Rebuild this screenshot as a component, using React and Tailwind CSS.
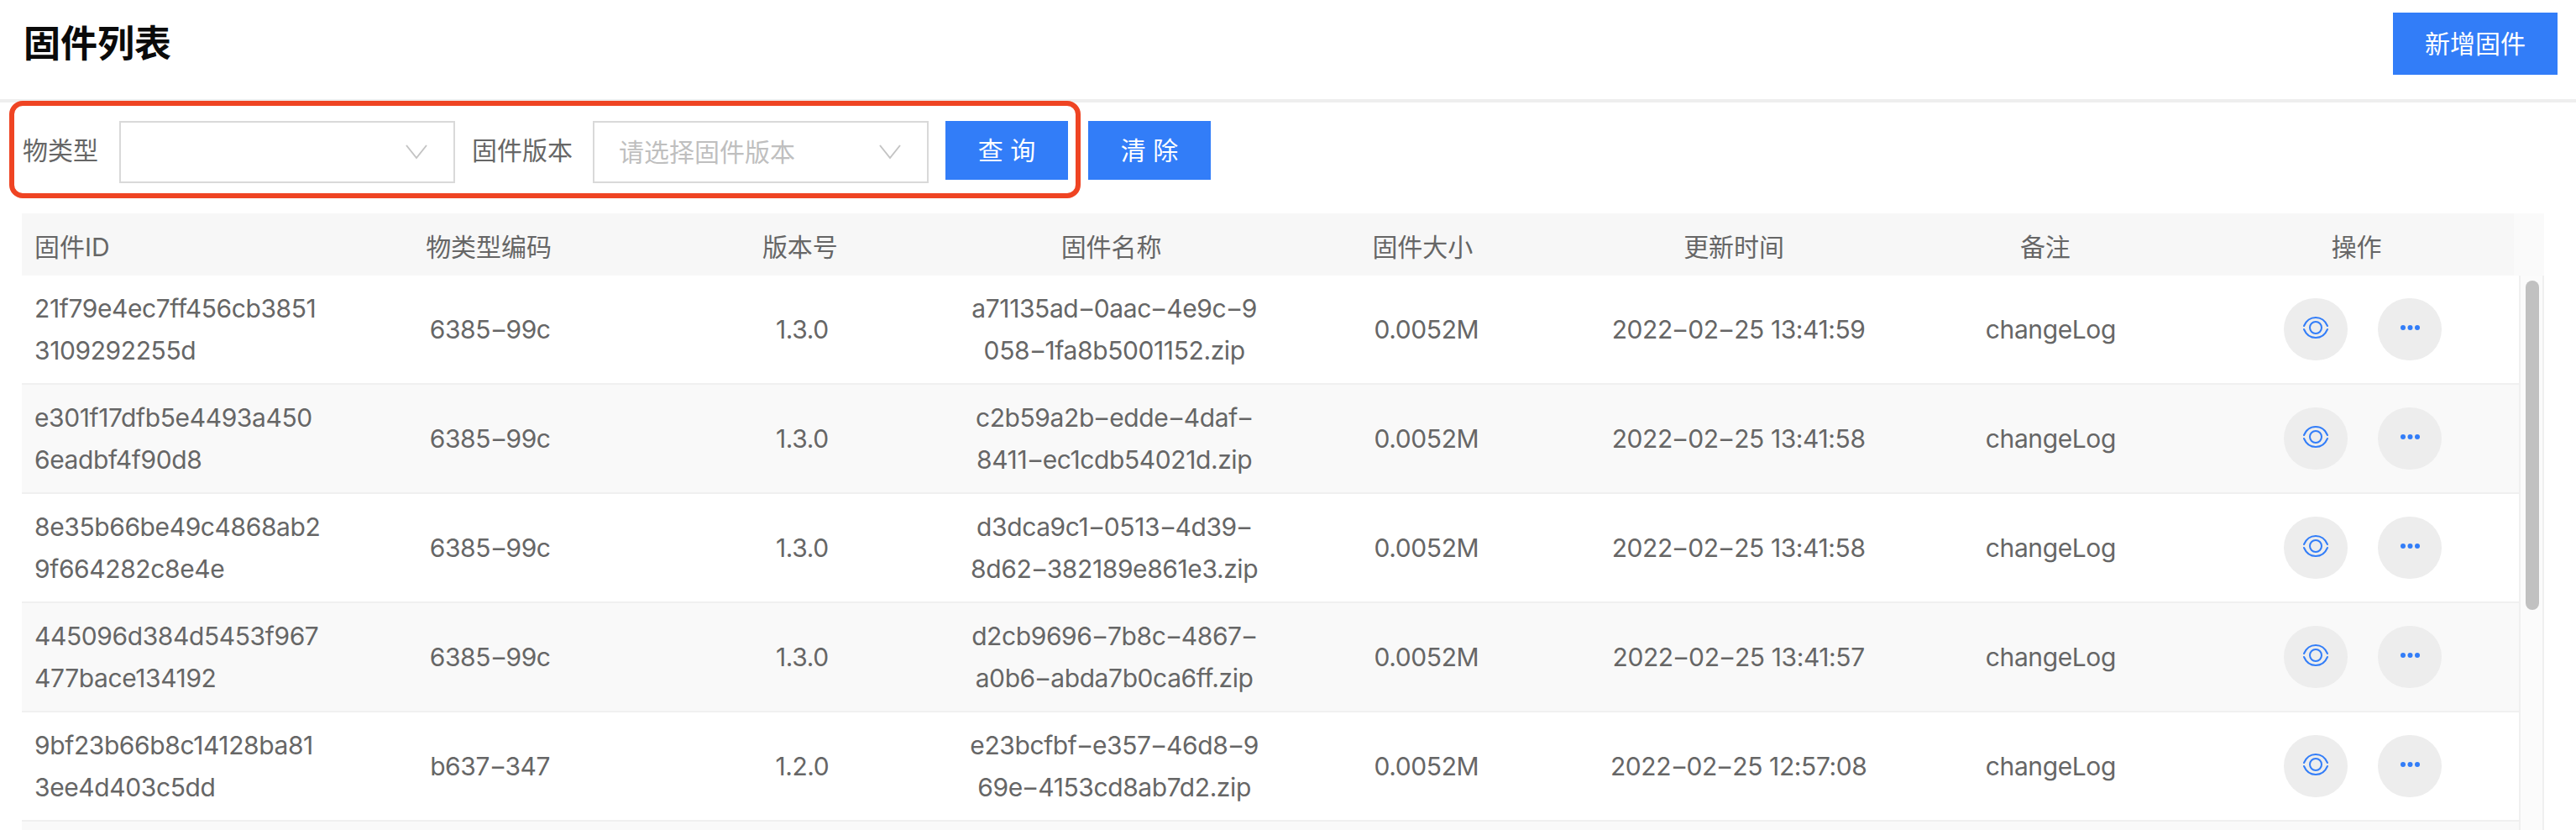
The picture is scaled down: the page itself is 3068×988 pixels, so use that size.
const rows = [
  { id: ['21f79e4ec7ff456cb3851', '3109292255d'], type: '6385-99c', ver: '1.3.0', name: ['a71135ad-0aac-4e9c-9', '058-1fa8b5001152.zip'], time: '2022-02-25 13:41:59' },
  { id: ['e301f17dfb5e4493a450', '6eadbf4f90d8'], type: '6385-99c', ver: '1.3.0', name: ['c2b59a2b-edde-4daf-', '8411-ec1cdb54021d.zip'], time: '2022-02-25 13:41:58' },
  { id: ['8e35b66be49c4868ab2', '9f664282c8e4e'], type: '6385-99c', ver: '1.3.0', name: ['d3dca9c1-0513-4d39-', '8d62-382189e861e3.zip'], time: '2022-02-25 13:41:58' },
  { id: ['445096d384d5453f967', '477bace134192'], type: '6385-99c', ver: '1.3.0', name: ['d2cb9696-7b8c-4867-', 'a0b6-abda7b0ca6ff.zip'], time: '2022-02-25 13:41:57' },
  { id: ['9bf23b66b8c14128ba81', '3ee4d403c5dd'], type: 'b637-347', ver: '1.2.0', name: ['e23bcfbf-e357-46d8-9', '69e-4153cd8ab7d2.zip'], time: '2022-02-25 12:57:08' },
];

const headers = ['物类型编码', '版本号', '固件名称', '固件大小', '更新时间', '备注', '操作'];

function Chevron() {
  return (
    <svg width="26" height="18" viewBox="0 0 26 18" fill="none" stroke="#c4c4c4" strokeWidth="2">
      <path d="M1 1l12 15L25 1" />
    </svg>
  );
}

function Eye() {
  return (
    <svg width="32" height="28" viewBox="0 0 32 28" fill="none" stroke="#327df8" strokeWidth="2" strokeLinecap="round">
      <circle cx="16" cy="14" r="7" />
      <path d="M2 12C5 5 10 2 16 2s11 3 14 10" />
      <path d="M2 16c3 7 8 10 14 10s11-3 14-10" />
    </svg>
  );
}

function Dots() {
  return (
    <svg width="24" height="8" viewBox="0 0 24 8" fill="#327df8">
      <circle cx="4" cy="4" r="3" />
      <circle cx="12.5" cy="4" r="3" />
      <circle cx="21" cy="4" r="3" />
    </svg>
  );
}

function Select({ placeholder }) {
  return (
    <div className="w-[400px] h-[74px] border-2 border-[#d9d9d9] flex items-center justify-between pl-[29px] pr-[31px] text-[#bfbfbf]">
      <span>{placeholder}</span>
      <Chevron />
    </div>
  );
}

// the hyphens in the reference font are much longer than Inter's
function Dashed({ text }) {
  return text.split('-').map((part, i) => (
    <span key={i}>
      {i > 0 && <span className="inline-block mx-[2.5px] scale-x-150">-</span>}
      {part}
    </span>
  ));
}

function Lines({ value }) {
  return value.map((line) => <div key={line}><Dashed text={line} /></div>);
}

export default function App() {
  return (
    <div className="h-[988px] overflow-hidden bg-white text-[30px] text-[#666] font-['Inter','Noto_Sans_CJK_SC',sans-serif]">
      <div className="h-[118px] pl-[28px] pr-[22px] pb-[14px] flex items-center justify-between">
        <h1 className="text-[44px] font-semibold text-[#0a0a0a]">固件列表</h1>
        <button className="w-[196px] h-[74px] bg-[#327df8] text-white">新增固件</button>
      </div>
      <div className="h-[4px] bg-[#eeeeee]" />

      <div className="relative flex items-start h-[132px] pt-[22px] pl-[27px]">
        <span className="w-[90px] h-[70px] leading-[70px]">物类型</span>
        <div className="ml-[25px]"><Select /></div>
        <span className="ml-[20px] w-[120px] h-[70px] leading-[70px]">固件版本</span>
        <div className="ml-[24px]"><Select placeholder="请选择固件版本" /></div>
        <button className="ml-[20px] w-[146px] h-[70px] bg-[#327df8] text-white">查 询</button>
        <button className="ml-[24px] w-[146px] h-[70px] bg-[#327df8] text-white">清 除</button>
        <div className="absolute left-[11px] -top-[2px] w-[1276px] h-[116px] border-[6px] border-[#ef4423] rounded-[16px]" />
      </div>

      <div className="ml-[26px] w-[3004px]">
        <div className="flex h-[74px] bg-[#fafafa]">
          <div className="w-[2968px] pr-[2px] grid grid-cols-8 bg-[#f7f7f7] items-center text-center pt-[6px]">
            <div className="pl-[15px] text-left">固件ID</div>
            {headers.map((h) => <div key={h}>{h}</div>)}
          </div>
        </div>
        <div className="flex h-[660px] overflow-hidden">
          <div className="w-[2974px] tracking-[-0.4px]">
            {rows.map((r, i) => (
              <div key={r.id[0]} className={`grid grid-cols-8 h-[130px] items-center text-center leading-[50px] border-b-2 border-[#f0f0f0] ${i % 2 ? 'bg-[#f9f9f9]' : 'bg-white'}`}>
                <div className="pl-[15px] text-left"><Lines value={r.id} /></div>
                <div><Dashed text={r.type} /></div>
                <div>{r.ver}</div>
                <div><Lines value={r.name} /></div>
                <div>0.0052M</div>
                <div><Dashed text={r.time} /></div>
                <div>changeLog</div>
                <div className="flex justify-center gap-[36px]">
                  <button className="w-[76px] h-[74px] rounded-full bg-[#ededed] flex items-center justify-center pb-[4px]"><Eye /></button>
                  <button className="w-[76px] h-[74px] rounded-full bg-[#ededed] flex items-center justify-center pb-[4px]"><Dots /></button>
                </div>
              </div>
            ))}
            <div className="h-[130px] bg-[#f9f9f9]" />
          </div>
          <div className="w-[30px] h-full bg-[#fbfbfb] border-x-2 border-[#f0f0f0] pt-[6px] pl-[6px]">
            <div className="w-[16px] h-[392px] rounded-full bg-[#c1c1c1]" />
          </div>
        </div>
      </div>
    </div>
  );
}
